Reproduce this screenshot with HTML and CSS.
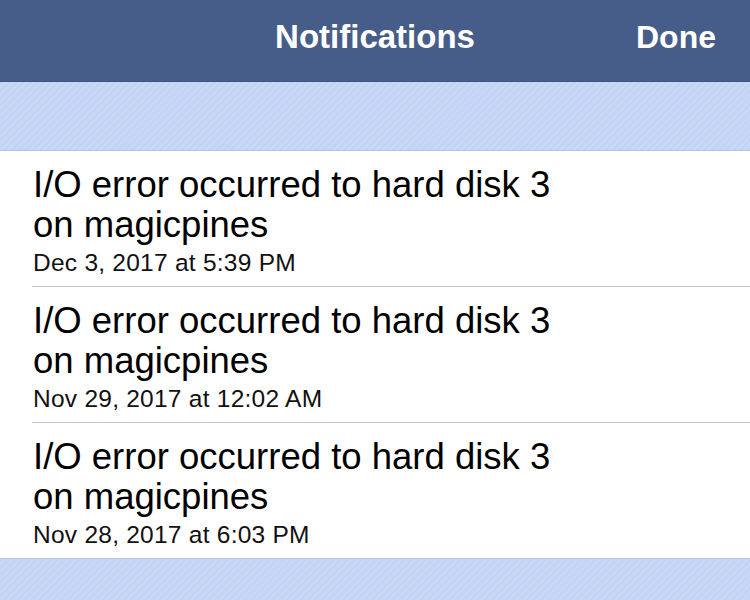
FILE: index.html
```html
<!DOCTYPE html>
<html>
<head>
<meta charset="utf-8">
<link rel="stylesheet" href="styles.css">
</head>
<body>
<div class="screen">
  <header class="navbar">
    <div class="nav-title">Notifications</div>
    <div class="nav-done">Done</div>
  </header>
  <div class="stripe top-stripe"></div>
  <ul class="list">
    <li class="row">
      <div class="msg">I/O error occurred to hard disk 3<br>on magicpines</div>
      <div class="date">Dec 3, 2017 at 5:39 PM</div>
    </li>
    <li class="row">
      <div class="msg">I/O error occurred to hard disk 3<br>on magicpines</div>
      <div class="date">Nov 29, 2017 at 12:02 AM</div>
    </li>
    <li class="row">
      <div class="msg">I/O error occurred to hard disk 3<br>on magicpines</div>
      <div class="date">Nov 28, 2017 at 6:03 PM</div>
    </li>
  </ul>
  <div class="stripe bottom-stripe"></div>
</div>
</body>
</html>
```
FILE: styles.css
```css
html, body {
  margin: 0;
  padding: 0;
}
body {
  width: 750px;
  height: 600px;
  overflow: hidden;
  font-family: "Liberation Sans", Arial, sans-serif;
  background: #c4d4f6;
}
.screen {
  display: flex;
  flex-direction: column;
  height: 600px;
}
.navbar {
  height: 81px;
  background: #475d89;
  border-bottom: 1px solid #3f5580;
  display: flex;
  align-items: center;
  justify-content: center;
  position: relative;
  color: #fff;
  font-weight: bold;
}
.nav-title {
  font-size: 33px;
  padding-bottom: 8px;
}
.nav-done {
  position: absolute;
  right: 34px;
  top: 0;
  line-height: 75px;
  font-size: 32px;
}
.stripe {
  background-color: #c4d4f6;
  background-image: repeating-linear-gradient(135deg, #c4d4f6 0px, #c4d4f6 3px, #cad8f6 3px, #cad8f6 5px);
}
.top-stripe {
  height: 68px;
  border-bottom: 1px solid #b8c3d8;
}
.list {
  list-style: none;
  margin: 0;
  padding: 0;
  background: #fff;
}
.row {
  padding: 14px 0 8px 33px;
  position: relative;
  color: #000;
}
.row + .row::before {
  content: "";
  position: absolute;
  left: 32px;
  right: 0;
  top: 0;
  height: 1px;
  background: #c8c7cc;
}
.msg {
  font-size: 36.5px;
  line-height: 40px;
}
.date {
  font-size: 24.5px;
  line-height: 30px;
  margin-top: 3px;
  letter-spacing: 0.25px;
  color: #111;
}
.row + .row {
  padding-top: 15px;
}
.bottom-stripe {
  flex: 1;
  border-top: 1px solid #b8c3d8;
}
```
